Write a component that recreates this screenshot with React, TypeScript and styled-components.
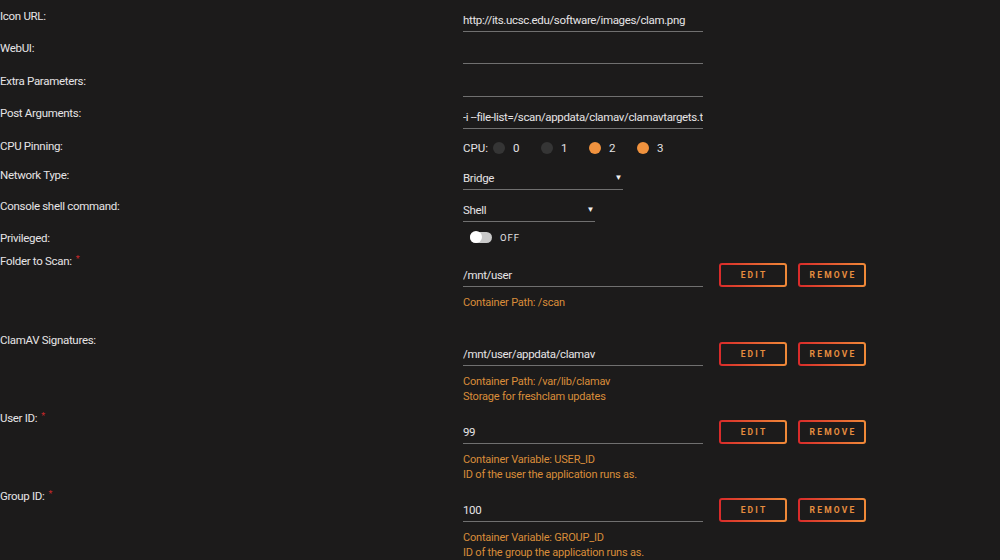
import styled, { createGlobalStyle } from 'styled-components';

const GlobalStyle = createGlobalStyle`
    html, body {
        margin: 0;
        padding: 0;
        background: #1c1b1b;
        font-family: Roboto, "Liberation Sans", sans-serif;
        color: #e4e2e4;
        overflow: hidden;
    }
`;

const Form = styled.div`
    padding-top: 8px;
    width: 1000px;
`;

const Row = styled.div<{ $h: number }>`
    display: grid;
    grid-template-columns: 463px 1fr;
    height: ${p => p.$h}px;
`;

const Label = styled.div`
    font-size: 11.5px;
    letter-spacing: -0.3px;
    line-height: 16px;
    color: #e6e4e6;
    white-space: nowrap;
`;

const Required = styled.span`
    color: #c8282a;
    font-size: 9px;
    vertical-align: top;
    margin-left: 4px;
    position: relative;
    top: -2px;
`;

const Value = styled.div<{ $top?: number }>`
    padding-top: ${p => p.$top ?? 0}px;
`;

const TextInput = styled.input`
    box-sizing: border-box;
    display: block;
    width: 240px;
    height: 20px;
    margin-top: 4px;
    padding: 0 0 3px 0;
    background: transparent;
    border: none;
    border-bottom: 1px solid #707070;
    outline: none;
    color: #e6e4e6;
    font-family: inherit;
    font-size: 11.5px;
    letter-spacing: -0.35px;
    line-height: 16px;
`;

const PathLine = styled.div`
    display: flex;
    align-items: flex-start;
    gap: 16px;
`;

const Buttons = styled.div`
    display: flex;
    gap: 11px;
`;

const GradButton = styled.button`
    box-sizing: border-box;
    width: 68px;
    height: 24px;
    border: 2px solid transparent;
    border-radius: 3px;
    background:
        linear-gradient(#1c1b1b, #1c1b1b) padding-box,
        linear-gradient(90deg, #d82a2a, #f08a38) border-box;
    color: #e68d3f;
    font-family: inherit;
    font-size: 8.5px;
    font-weight: 700;
    letter-spacing: 2.2px;
    padding: 0 0 0 2px;
    cursor: pointer;
`;

const Desc = styled.div`
    margin-top: 8px;
    font-size: 11px;
    letter-spacing: -0.2px;
    line-height: 15px;
    color: #d98d3a;
`;

const CpuLine = styled.div`
    display: flex;
    align-items: center;
    height: 16px;
    margin-top: 2px;
    font-size: 11.5px;
`;

const CpuItem = styled.label`
    display: flex;
    align-items: center;
    width: 48px;
`;

const CpuHead = styled.span`
    width: 30px;
`;

const Dot = styled.span<{ $on: boolean }>`
    width: 12px;
    height: 12px;
    border-radius: 50%;
    background: ${p => (p.$on ? '#f0923e' : '#353535')};
    margin-right: 8px;
`;

const Select = styled.div<{ $w: number }>`
    box-sizing: border-box;
    display: flex;
    justify-content: space-between;
    align-items: center;
    width: ${p => p.$w}px;
    height: 22px;
    margin-top: 1px;
    padding: 0 0 2px 0;
    border-bottom: 1px solid #707070;
    font-size: 11.5px;
    letter-spacing: -0.3px;
`;

const Caret = styled.span`
    font-size: 8px;
    margin-right: 1px;
    color: #f0f0f0;
`;

const ToggleLine = styled.div`
    display: flex;
    align-items: center;
    gap: 8px;
    height: 16px;
    padding-left: 7px;
    margin-top: -1px;
    font-size: 9.5px;
    letter-spacing: 1px;
`;

const Track = styled.span`
    position: relative;
    width: 22px;
    height: 11px;
    border-radius: 6px;
    background: #c9c9c9;
`;

const Knob = styled.span`
    position: absolute;
    left: 0;
    top: -0.5px;
    width: 12px;
    height: 12px;
    border-radius: 50%;
    background: #ffffff;
`;

const Footer = styled.div`
    position: fixed;
    left: 0;
    right: 0;
    bottom: 0;
    height: 10px;
    background: #121212;
    z-index: -1;
`;

type PathRowProps = {
    label: string;
    value: string;
    desc: string[];
    h: number;
    required?: boolean;
};

function PathRow({ label, value, desc, h, required }: PathRowProps) {
    return (
        <Row $h={h}>
            <Label>
                {label}
                {required && <Required>*</Required>}
            </Label>
            <Value $top={10}>
                <PathLine>
                    <TextInput defaultValue={value} readOnly />
                    <Buttons>
                        <GradButton>EDIT</GradButton>
                        <GradButton>REMOVE</GradButton>
                    </Buttons>
                </PathLine>
                <Desc>
                    {desc.map(d => (
                        <div key={d}>{d}</div>
                    ))}
                </Desc>
            </Value>
        </Row>
    );
}

const cpus = [
    { n: 0, on: false },
    { n: 1, on: false },
    { n: 2, on: true },
    { n: 3, on: true },
];

export default function App() {
    return (
        <>
            <GlobalStyle />
            <Form>
                <Row $h={32}>
                    <Label>Icon URL:</Label>
                    <Value>
                        <TextInput defaultValue="http://its.ucsc.edu/software/images/clam.png" readOnly />
                    </Value>
                </Row>
                <Row $h={33}>
                    <Label>WebUI:</Label>
                    <Value>
                        <TextInput defaultValue="" readOnly />
                    </Value>
                </Row>
                <Row $h={32}>
                    <Label>Extra Parameters:</Label>
                    <Value>
                        <TextInput defaultValue="" readOnly />
                    </Value>
                </Row>
                <Row $h={33}>
                    <Label>Post Arguments:</Label>
                    <Value>
                        <TextInput
                            defaultValue="-i --file-list=/scan/appdata/clamav/clamavtargets.txt --log=/var/log/clamav.log"
                            readOnly
                        />
                    </Value>
                </Row>
                <Row $h={29}>
                    <Label>CPU Pinning:</Label>
                    <Value>
                        <CpuLine>
                            <CpuHead>CPU:</CpuHead>
                            {cpus.map(c => (
                                <CpuItem key={c.n}>
                                    <Dot $on={c.on} />
                                    {c.n}
                                </CpuItem>
                            ))}
                        </CpuLine>
                    </Value>
                </Row>
                <Row $h={31}>
                    <Label>Network Type:</Label>
                    <Value>
                        <Select $w={160}>
                            Bridge <Caret>▼</Caret>
                        </Select>
                    </Value>
                </Row>
                <Row $h={32}>
                    <Label>Console shell command:</Label>
                    <Value $top={1}>
                        <Select $w={132}>
                            Shell <Caret>▼</Caret>
                        </Select>
                    </Value>
                </Row>
                <Row $h={23}>
                    <Label>Privileged:</Label>
                    <Value>
                        <ToggleLine>
                            <Track>
                                <Knob />
                            </Track>
                            OFF
                        </ToggleLine>
                    </Value>
                </Row>
                <PathRow label="Folder to Scan:" required value="/mnt/user" desc={['Container Path: /scan']} h={79} />
                <PathRow
                    label="ClamAV Signatures:"
                    value="/mnt/user/appdata/clamav"
                    desc={['Container Path: /var/lib/clamav', 'Storage for freshclam updates']}
                    h={78}
                />
                <PathRow
                    label="User ID:"
                    required
                    value="99"
                    desc={['Container Variable: USER_ID', 'ID of the user the application runs as.']}
                    h={78}
                />
                <PathRow
                    label="Group ID:"
                    required
                    value="100"
                    desc={['Container Variable: GROUP_ID', 'ID of the group the application runs as.']}
                    h={78}
                />
            </Form>
            <Footer />
        </>
    );
}
